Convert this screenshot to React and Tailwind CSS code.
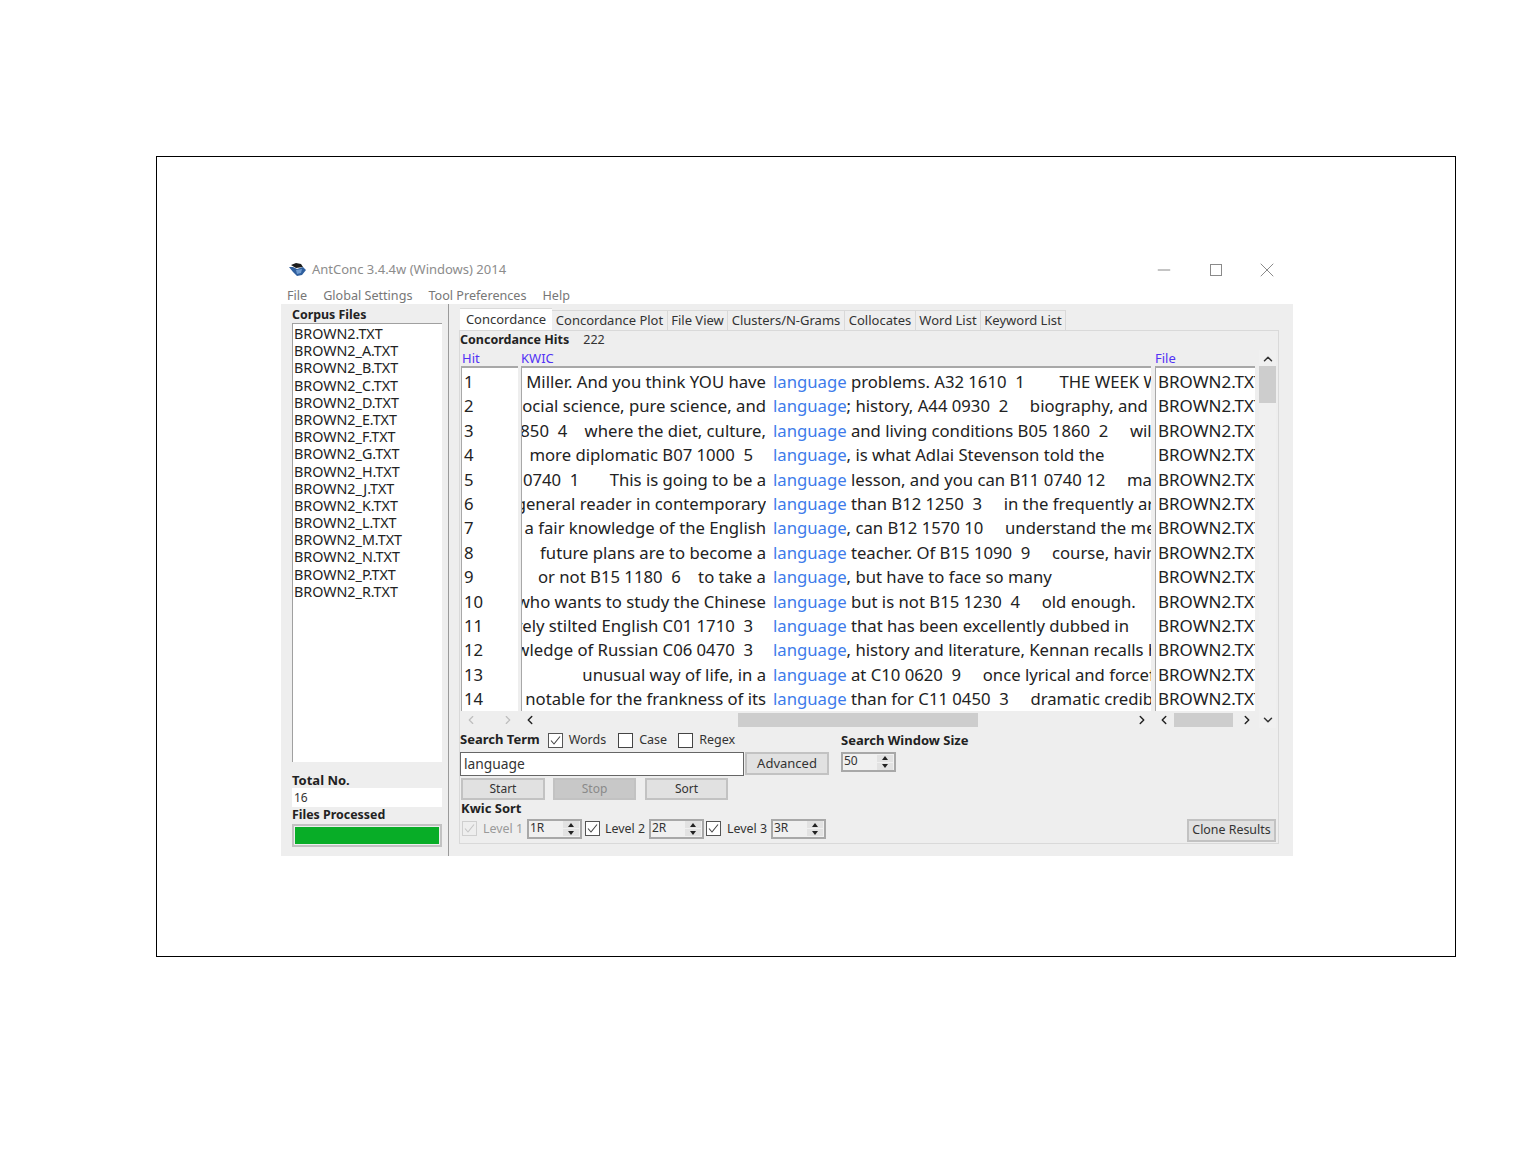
import { ChevronUp, ChevronDown, ChevronLeft, ChevronRight, Minus, X } from 'lucide-react';

const corpusFiles = [
  'BROWN2.TXT', 'BROWN2_A.TXT', 'BROWN2_B.TXT', 'BROWN2_C.TXT', 'BROWN2_D.TXT', 'BROWN2_E.TXT',
  'BROWN2_F.TXT', 'BROWN2_G.TXT', 'BROWN2_H.TXT', 'BROWN2_J.TXT', 'BROWN2_K.TXT', 'BROWN2_L.TXT',
  'BROWN2_M.TXT', 'BROWN2_N.TXT', 'BROWN2_P.TXT', 'BROWN2_R.TXT',
];

const hits = [
  ['Miller. And you think YOU have', ' problems. A32 1610  1        THE WEEK WAS'],
  ['social science, pure science, and', '; history, A44 0930  2     biography, and'],
  ['B05 1850  4    where the diet, culture,', ' and living conditions B05 1860  2     will'],
  ['more diplomatic B07 1000  5   ', ', is what Adlai Stevenson told the'],
  ['B11 0740  1       This is going to be a', ' lesson, and you can B11 0740 12     make'],
  ['the general reader in contemporary', ' than B12 1250  3     in the frequently are'],
  ['a fair knowledge of the English', ', can B12 1570 10     understand the meaning'],
  ['future plans are to become a', ' teacher. Of B15 1090  9     course, having'],
  ['or not B15 1180  6    to take a', ', but have to face so many'],
  ['who wants to study the Chinese', ' but is not B15 1230  4     old enough.'],
  ['rely stilted English C01 1710  3   ', ' that has been excellently dubbed in'],
  ['knowledge of Russian C06 0470  3   ', ', history and literature, Kennan recalls how'],
  ['unusual way of life, in a', ' at C10 0620  9     once lyrical and forceful'],
  ['notable for the frankness of its', ' than for C11 0450  3     dramatic credibility'],
];

const Check = ({ muted }) => (
  <svg width="15" height="15" viewBox="0 0 15 15" className="shrink-0">
    <rect x="0.5" y="0.5" width="14" height="14" fill={muted ? '#eeeeee' : '#ffffff'} stroke={muted ? '#cfcfcf' : '#555555'} />
    {/* tick */}
    <path d="M3 7.5 L6 11 L12 3.5" fill="none" stroke={muted ? '#c4c4c4' : '#444444'} strokeWidth="1.1" />
  </svg>
);

const Checkbox = ({ label, checked, className }) => (
  <div className={`flex items-center gap-[6px] ${className}`}>
    {checked ? <Check /> : <div className="w-[15px] h-[15px] border border-[#444] bg-white" />}
    <span>{label}</span>
  </div>
);

const Spinner = ({ value }) => (
  <div className="flex items-center w-[55px] h-[20px] border-2 border-[#a8a8a8] bg-[#f0f0f0]">
    <span className="flex-1 pl-px -mt-[2px] text-[12px] text-[#333]">{value}</span>
    <div className="flex flex-col gap-px w-[16px] mr-px">
      <div className="h-[7px] bg-[#e2e2e2] flex items-center justify-center">
        <div className="w-0 h-0 border-x-[3px] border-x-transparent border-b-[4px] border-b-[#222]" />
      </div>
      <div className="h-[7px] bg-[#e2e2e2] flex items-center justify-center">
        <div className="w-0 h-0 border-x-[3px] border-x-transparent border-t-[4px] border-t-[#222]" />
      </div>
    </div>
  </div>
);

const Tab = ({ label, width }) => (
  <div className={`h-[20px] border-t border-r border-[#d9d9d9] flex items-center justify-center text-[13px] text-[#333] ${width}`}>
    {label}
  </div>
);

const App = () => {
  return (
    <div className="h-[1152px] bg-white pt-[156px] pl-[156px] text-[#333]" style={{ fontFamily: '"Noto Sans", sans-serif' }}>
      <div className="w-[1300px] h-[801px] border border-black pt-[101px] pl-[124px]">
        <div className="w-[1012px]">
          {/* Title bar */}
          <div className="h-[23px] flex items-center pl-[7px]">
            <svg width="19" height="15" viewBox="0 0 19 15" className="shrink-0">
              <path d="M3 3 L8 1 L13 2 L15 5 L8 6 Z" fill="#1c1c1c" />
              <path d="M1 5 L5 5 L9 7 L15 5 L18 8 L14 13 L9 14 L5 10 Z" fill="#2f5f9e" />
              <path d="M8 8 L14 7 L13 11 L9 12 Z" fill="#6f9bd0" />
            </svg>
            <span className="ml-[5px] text-[13px] text-[#8c8c8c]">AntConc 3.4.4w (Windows) 2014</span>
            <div className="ml-auto flex items-center gap-[27.5px] pr-[14px] text-[#8a8a8a]">
              <div className="w-[24px] flex justify-center"><Minus size={20} strokeWidth={1.2} /></div>
              <div className="w-[24px] flex justify-center"><div className="w-[12px] h-[12px] border border-[#8a8a8a]" /></div>
              <div className="w-[24px] flex justify-center"><X size={24} strokeWidth={1} /></div>
            </div>
          </div>

          {/* Menu */}
          <div className="h-[23px] flex items-center gap-4 pl-[6px] pt-[7px] text-[12.6px] text-[#777]">
            <span>File</span>
            <span>Global Settings</span>
            <span>Tool Preferences</span>
            <span>Help</span>
          </div>

          {/* Body */}
          <div className="h-[552px] bg-[#eeeeee] flex">
            {/* Left column */}
            <div className="w-[168px] shrink-0 border-r border-[#9a9a9a] pl-[11px] pr-[6px] flex flex-col">
              <div className="h-[19px] pt-[2px] text-[12.4px] leading-[18px] font-bold text-[#222]">Corpus Files</div>
              <div className="h-[439px] bg-white border-l border-t border-[#a0a0a0] pl-[1px] pt-[1px] w-[150px]">
                {corpusFiles.map((file) => (
                  <div key={file} className="h-[17.2px] leading-[17px] text-[14.3px] text-[#222]">{file}</div>
                ))}
              </div>
              <div className="mt-[10px] h-[16px] leading-[16px] text-[13px] font-bold text-[#222]">Total No.</div>
              <div className="h-[19px] w-[150px] bg-white pl-[2px] leading-[19px] text-[12px] text-[#333]">16</div>
              <div className="h-[16px] leading-[16px] text-[12.4px] font-bold text-[#222]">Files Processed</div>
              <div className="mt-px w-[150px] h-[23px] border-2 border-[#c2c2c2] p-[1px]">
                <div className="h-full bg-[#08ad27]" />
              </div>
            </div>

            {/* Right column */}
            <div className="flex-1 pl-[11px] pt-[4px]">
              {/* Tabs */}
              <div className="flex items-end h-[22px]">
                <div className="w-[92px] h-[22px] bg-white border-t border-[#d9d9d9] flex items-center justify-center text-[13px] text-[#333]">Concordance</div>
                <Tab label="Concordance Plot" width="w-[116px]" />
                <Tab label="File View" width="w-[60px]" />
                <Tab label="Clusters/N-Grams" width="w-[117px]" />
                <Tab label="Collocates" width="w-[71px]" />
                <Tab label="Word List" width="w-[65px]" />
                <Tab label="Keyword List" width="w-[85px]" />
              </div>

              {/* Tab panel */}
              <div className="-ml-px w-[820px] h-[514px] border border-[#d9d9d9] flex flex-col">
                <div className="h-[19px] flex items-center text-[12.5px] gap-[14px]">
                  <span className="font-bold text-[#222]">Concordance Hits</span>
                  <span>222</span>
                </div>

                <div className="flex">
                  <div className="flex flex-col w-[799px]">
                    {/* Column headers */}
                    <div className="h-[16px] flex text-[13px] leading-[16px] text-[#5233f5]">
                      <div className="w-[61px] pl-[2px]">Hit</div>
                      <div className="w-[634px]">KWIC</div>
                      <div className="w-[104px]">File</div>
                    </div>

                    {/* Results */}
                    <div className="h-[345px] flex overflow-hidden text-[16.7px] leading-[24.4px] text-[#222]">
                      <div className="ml-px w-[57px] bg-white pl-[2px] pt-[2px] border-l border-t-2 border-[#a8a8a8]">
                        {hits.map((_, i) => (
                          <div key={i} className="h-[24.4px]">{i + 1}</div>
                        ))}
                      </div>
                      <div className="w-[630px] ml-[3px] bg-white border-l border-t-2 border-[#a8a8a8] pt-[2px]">
                        {hits.map(([left, right], i) => (
                          <div key={i} className="h-[24.4px] flex whitespace-pre">
                            <div className="w-[244px] shrink-0 flex justify-end overflow-hidden">
                              <span className="shrink-0">{left}</span>
                            </div>
                            <div className="w-[385px] pl-[7px] overflow-hidden">
                              <span className="text-[#3d7bea]">language</span>{right}
                            </div>
                          </div>
                        ))}
                      </div>
                      <div className="w-[100px] ml-[4px] bg-white border-l border-t-2 border-[#a8a8a8] pl-[2px] pt-[2px] overflow-hidden text-[17px]">
                        {hits.map((_, i) => (
                          <div key={i} className="h-[24.4px] whitespace-pre">BROWN2.TXT</div>
                        ))}
                      </div>
                    </div>

                    {/* Horizontal scrollbars */}
                    <div className="h-[17px] flex items-center text-[#222]">
                      <div className="w-[61px] flex items-center gap-[23px] pl-[4px] text-[#bdbdbd]">
                        <ChevronLeft size={14} />
                        <ChevronRight size={14} />
                      </div>
                      <div className="w-[634px] flex items-center">
                        <ChevronLeft size={14} strokeWidth={2.5} className="ml-[2px]" />
                        <div className="ml-[201px] w-[240px] h-[14px] bg-[#cdcdcd]" />
                        <ChevronRight size={14} strokeWidth={2.5} className="ml-[157px]" />
                      </div>
                      <div className="w-[104px] flex items-center pl-[2px]">
                        <ChevronLeft size={14} strokeWidth={2.5} />
                        <div className="ml-[3px] w-[59px] h-[14px] bg-[#cdcdcd]" />
                        <ChevronRight size={14} strokeWidth={2.5} className="ml-[7px]" />
                      </div>
                    </div>
                  </div>

                  {/* Vertical scrollbar */}
                  <div className="w-[17px] bg-[#f0f0f0] h-[378px] flex flex-col items-center">
                    <ChevronUp size={14} strokeWidth={2.5} className="mt-[2px] shrink-0" />
                    <div className="w-full h-[37px] bg-[#cdcdcd] shrink-0" />
                    <ChevronDown size={14} strokeWidth={2.5} className="mt-auto mb-px shrink-0" />
                  </div>
                </div>

                {/* Search controls */}
                <div className="mt-[2px] flex">
                  <div className="w-[381px]">
                    <div className="h-[20px] flex items-center text-[12.5px]">
                      <span className="text-[13px] font-bold text-[#222] mr-[8px]">Search Term</span>
                      <Checkbox label="Words" checked className="mr-[12px]" />
                      <Checkbox label="Case" className="mr-[11px]" />
                      <Checkbox label="Regex" />
                    </div>
                    <div className="mt-[2px] flex">
                      <div className="w-[284px] h-[24px] bg-white border border-[#666] pl-[3px] text-[13.8px] leading-[22px]">language</div>
                      <div className="ml-px w-[84px] h-[23px] bg-[#e1e1e1] border-2 border-[#c2c2c2] flex items-center justify-center text-[13px]">Advanced</div>
                    </div>
                    <div className="mt-[2px] ml-px flex gap-[8px] text-[12px] text-center leading-[18px]">
                      <div className="w-[84px] h-[22px] bg-[#e1e1e1] border-2 border-[#c2c2c2]">Start</div>
                      <div className="w-[83px] h-[22px] bg-[#c8c8c8] border-2 border-[#c2c2c2] text-[#8a8a8a]">Stop</div>
                      <div className="ml-px w-[83px] h-[22px] bg-[#e1e1e1] border-2 border-[#c2c2c2]">Sort</div>
                    </div>
                  </div>
                  <div>
                    <div className="h-[20px] leading-[20px] text-[13px] font-bold text-[#222]">Search Window Size</div>
                    <div className="mt-[2px]"><Spinner value="50" /></div>
                  </div>
                </div>
                <div className="pl-px h-[17px] leading-[17px] text-[13px] font-bold text-[#222]">Kwic Sort</div>
                <div className="flex items-center text-[12.4px] pr-[2px]">
                  <div className="flex items-center gap-[6px] ml-[2px] text-[#9a9a9a]"><Check muted /><span className="w-[40px] whitespace-nowrap pt-[2px]">Level 1</span></div>
                  <div className="ml-[4px] mr-[3px]"><Spinner value="1R" /></div>
                  <div className="flex items-center gap-[5px]"><Check /><span className="w-[40px] whitespace-nowrap pt-[2px]">Level 2</span></div>
                  <div className="ml-[4px] mr-[2px]"><Spinner value="2R" /></div>
                  <div className="flex items-center gap-[6px]"><Check /><span className="w-[40px] whitespace-nowrap pt-[2px]">Level 3</span></div>
                  <div className="ml-[4px]"><Spinner value="3R" /></div>
                  <div className="ml-auto mt-[2px] -mb-[2px] w-[89px] h-[23px] bg-[#e1e1e1] border-2 border-[#c2c2c2] flex items-center justify-center whitespace-nowrap">Clone Results</div>
                </div>
              </div>
            </div>
          </div>
        </div>
      </div>
    </div>
  );
};

export default App;
